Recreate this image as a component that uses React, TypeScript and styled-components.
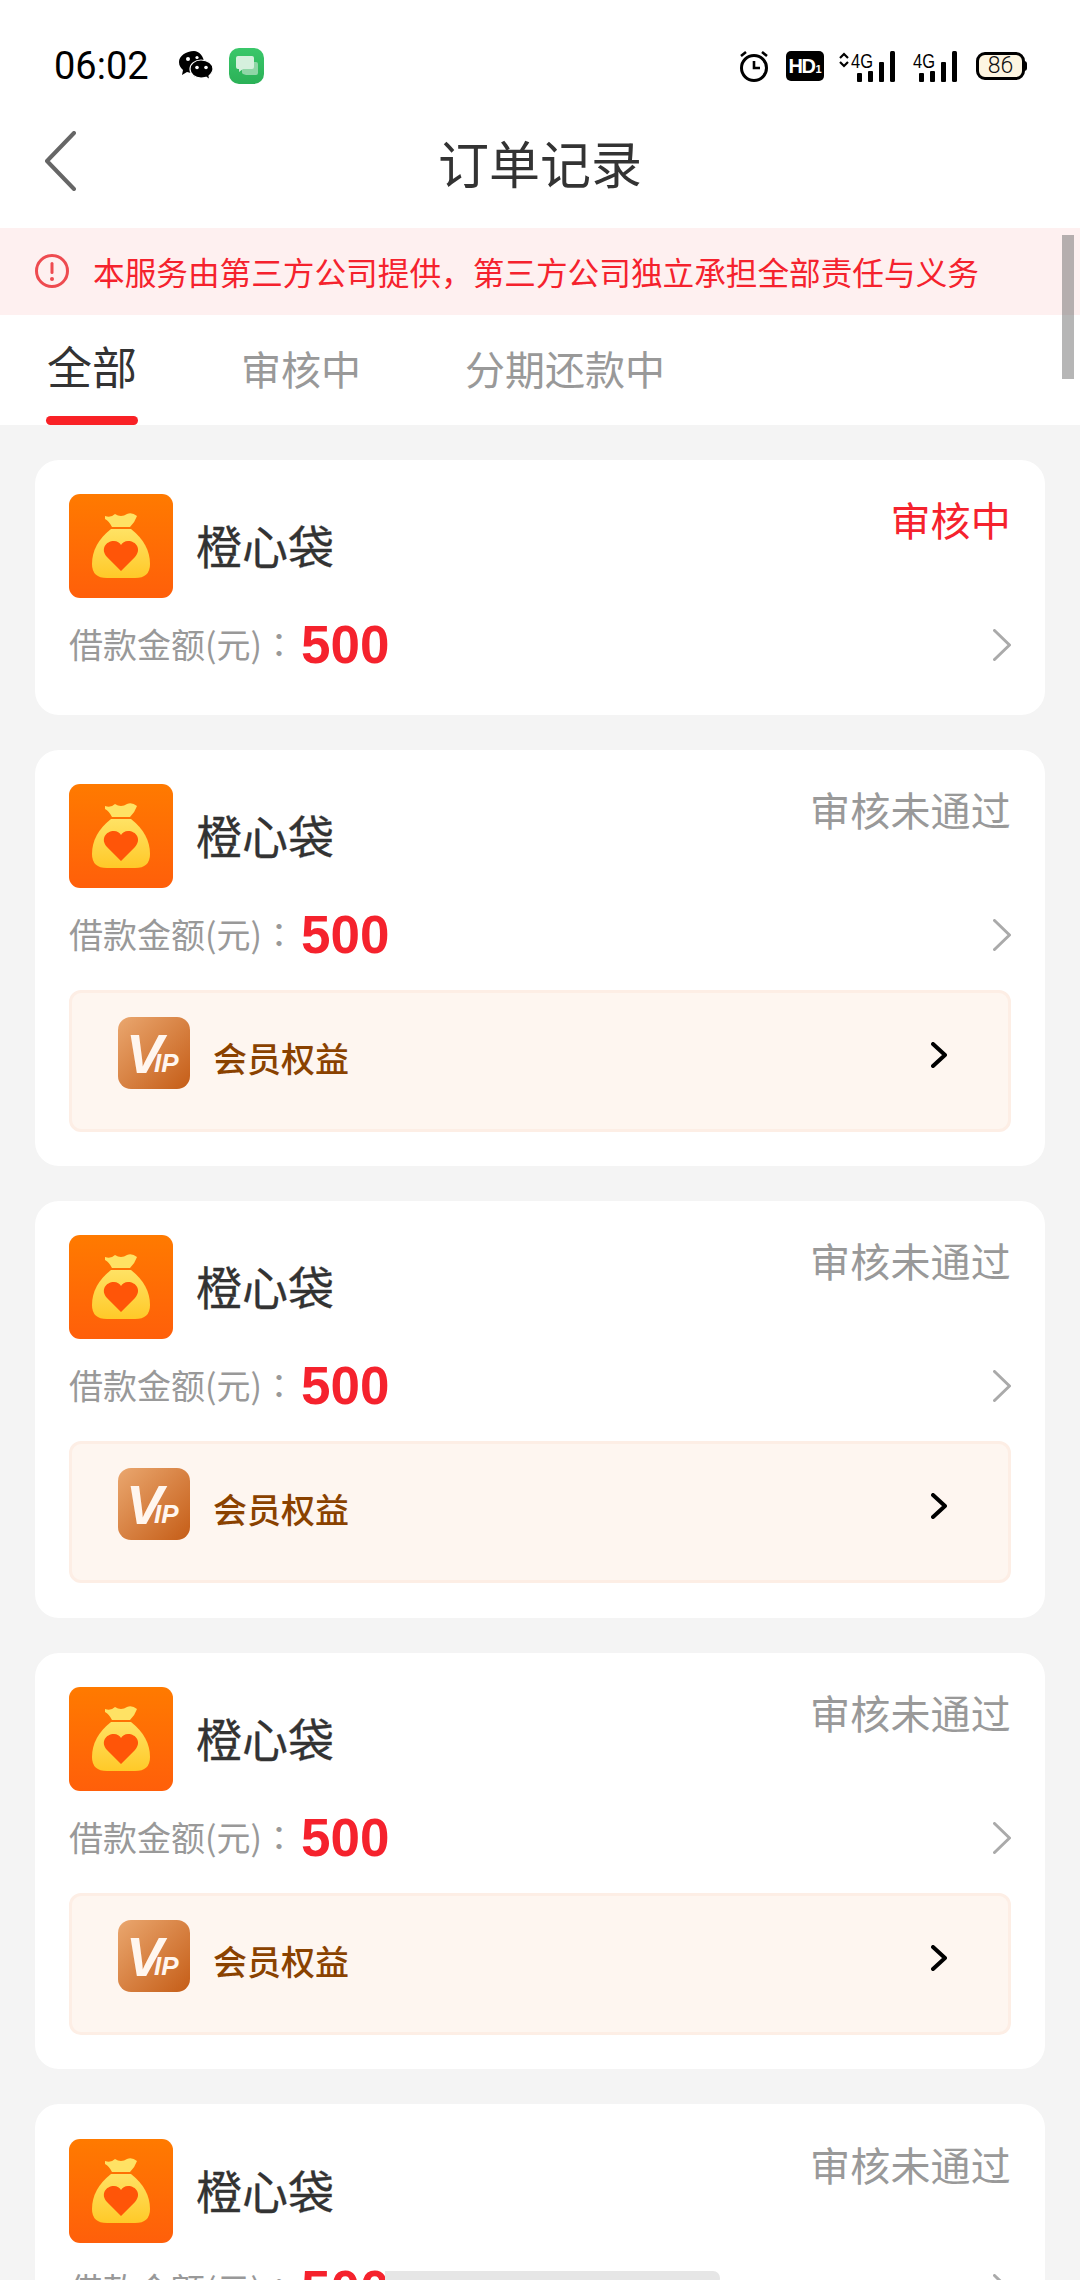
import React from "react";
import styled, { createGlobalStyle } from "styled-components";

const Global = createGlobalStyle`
  html, body { margin: 0; padding: 0; background: #f4f4f4; }
  * { box-sizing: border-box; }
`;

const CJK = `"Noto Sans CJK SC", "Noto Sans", sans-serif`;

const Page = styled.div`
  position: relative;
  width: 1080px;
  height: 2280px;
  overflow: hidden;
  background: #f4f4f4;
  font-family: ${CJK};
`;

const StatusBar = styled.div`
  height: 96px;
  padding: 36px 55px 0 54px;
  background: #fff;
  display: flex;
  align-items: center;
  justify-content: space-between;
  color: #000;
`;
const StatusLeft = styled.div`
  display: flex;
  align-items: center;
`;
const Clock = styled.span`
  font-family: Roboto, sans-serif;
  font-size: 38px;
  line-height: 40px;
  width: 125px;
`;
const StatusRight = styled.div`
  display: flex;
  align-items: center;
`;
const HdBadge = styled.span`
  width: 38px;
  height: 30px;
  margin: 0 15px 0 18px;
  border-radius: 5px;
  background: #000;
  color: #fff;
  font-family: "Liberation Sans", sans-serif;
  font-weight: 700;
  font-size: 20px;
  line-height: 30px;
  text-align: center;
  letter-spacing: -1.500px;
  white-space: nowrap;
  sub {
    font-size: 11px;
    vertical-align: baseline;
    letter-spacing: 0;
    margin-left: 1px;
  }
`;
const Battery = styled.span`
  width: 49px;
  height: 28px;
  margin-left: 19px;
  border: 3px solid #000;
  border-radius: 9px;
  background: #fdf5e1;
  color: #111;
  font-family: Roboto, sans-serif;
  font-weight: 300;
  font-size: 23px;
  line-height: 22px;
  text-align: center;
  position: relative;
  &::after {
    content: "";
    position: absolute;
    right: -5px;
    top: 6px;
    width: 3px;
    height: 10px;
    border-radius: 0 3px 3px 0;
    background: #000;
  }
`;

const NavBar = styled.div`
  position: relative;
  height: 132px;
  background: #fff;
  display: flex;
  align-items: center;
  justify-content: center;
`;
const BackButton = styled.svg`
  position: absolute;
  left: 44px;
  top: 35px;
`;
const Title = styled.h1`
  margin: 0;
  font-size: 51px;
  font-weight: 400;
  color: #333;
  line-height: 70px;
`;

const Banner = styled.div`
  height: 87px;
  padding: 0 0 2px 35px;
  background: #fef0f0;
  display: flex;
  align-items: center;
  gap: 24px;
  color: #f5222d;
  font-size: 31.650px;
  white-space: nowrap;
`;

const Tabs = styled.div`
  height: 110px;
  padding-left: 47px;
  background: #fff;
  display: flex;
  gap: 104px;
`;
const Tab = styled.div<{ $active?: boolean }>`
  position: relative;
  height: 110px;
  line-height: ${(p) => (p.$active ? "102px" : "106px")};
  font-size: ${(p) => (p.$active ? "45px" : "40px")};
  color: ${(p) => (p.$active ? "#333" : "#999")};
  &::after {
    content: "";
    display: ${(p) => (p.$active ? "block" : "none")};
    position: absolute;
    left: -1px;
    right: -1px;
    bottom: 0;
    height: 9px;
    border-radius: 5px;
    background: #f92126;
  }
`;

const List = styled.div`
  padding: 35px 35px 0;
  display: flex;
  flex-direction: column;
  gap: 35px;
`;
const Card = styled.div`
  flex: none;
  padding: 34.200px 34px 34.400px;
  background: #fff;
  border-radius: 24px;
`;
const CardHead = styled.div`
  display: flex;
  align-items: flex-start;
`;
const AppIcon = styled.svg`
  flex: none;
  display: block;
`;
const AppName = styled.div`
  margin-left: 23px;
  height: 104px;
  line-height: 100px;
  font-size: 46px;
  color: #333;
  flex: 1;
  -webkit-text-stroke: 0.300px #333;
`;
const Status = styled.div<{ $pending?: boolean }>`
  margin-top: -5px;
  font-size: 40px;
  line-height: 60px;
  letter-spacing: 0.200px;
  color: ${(p) => (p.$pending ? "#f5222d" : "#999")};
`;
const AmountRow = styled.div`
  margin-top: 12px;
  height: 70px;
  display: flex;
  align-items: center;
`;
const AmountLabel = styled.span`
  font-size: 34px;
  line-height: 68px;
  height: 70px;
  color: #999;
  white-space: nowrap;
  width: 232px;
`;
const LabelColon = styled.span`
  font-family: "Noto Sans CJK TC", sans-serif;
`;
const AmountValue = styled.span`
  flex: 1;
  font-family: "Liberation Sans", Arial, sans-serif;
  font-weight: 700;
  font-size: 53px;
  line-height: 70px;
  color: #f5222d;
`;
const VipPanel = styled.div`
  margin-top: 20px;
  height: 142px;
  padding: 24px 61px 0 46px;
  background: #fef6f0;
  border: 3px solid #fdeee5;
  border-radius: 12px;
  display: flex;
  align-items: flex-start;
`;
const VipName = styled.span`
  margin-left: 23px;
  margin-top: 17px;
  font-size: 34px;
  line-height: 48px;
  color: #8a4200;
  font-weight: 500;
  flex: 1;
`;
const VipArrow = styled.svg`
  margin-top: 25px;
`;

const HomeBar = styled.div`
  position: absolute;
  left: 385px;
  top: 2271px;
  width: 335px;
  height: 14px;
  border-radius: 0 7px 7px 0;
  background: #e6e6e6;
`;
const ScrollThumb = styled.div`
  position: absolute;
  left: 1062px;
  top: 235px;
  width: 12px;
  height: 144px;
  background: rgba(100, 100, 100, 0.47);
`;

const SignalSvg = styled.svg<{ $second?: boolean }>`
  overflow: visible;
  margin-left: ${(p) => (p.$second ? "18px" : "0")};
`;

const Wechat = () => (
  <svg width="34" height="30" viewBox="0 0 34 30">
    <path d="M15 0C7 0 0 5 0 11c0 4 2 6 4 8l-1 5 5-3c2 .6 4 1 6 1 0-5 5-10 11-10C25 5 20 0 15 0z" fill="#000" />
    <path d="M22 9c-6 0-11 4-11 9s5 9 11 9c2 0 3-.2 5-.8l4 2.800-1-4c2-2 4-4 4-7 0-5-5-9-12-9z" fill="#000" stroke="#fff" strokeWidth="1.200" />
    <circle cx="9" cy="8" r="2" fill="#fff" />
    <circle cx="18" cy="6.500" r="1.600" fill="#fff" />
    <circle cx="18" cy="16.500" r="1.800" fill="#fff" />
    <circle cx="27" cy="16.500" r="1.800" fill="#fff" />
  </svg>
);

const MessageApp = () => (
  <svg width="35" height="36" viewBox="0 0 35 36" style={{ marginLeft: 16 }}>
    <defs>
      <linearGradient id="msgBg" x1="0" y1="0" x2="0" y2="1">
        <stop offset="0" stopColor="#3ac76a" />
        <stop offset="1" stopColor="#2bb157" />
      </linearGradient>
    </defs>
    <rect width="35" height="36" rx="10" fill="url(#msgBg)" />
    <path d="M13 14h14a2 2 0 0 1 2 2v9a2 2 0 0 1-2 2h-10l-3-1a2 2 0 0 1-1-2z" fill="#8fd6a6" />
    <path d="M9 8h14a2 2 0 0 1 2 2v9a2 2 0 0 1-2 2H14l-4 3v-3H9a2 2 0 0 1-2-2v-9a2 2 0 0 1 2-2z" fill="#d5f0dd" />
  </svg>
);

const Alarm = () => (
  <svg width="30" height="32" viewBox="0 0 30 32" fill="none" stroke="#000" style={{ marginRight: -1 }}>
    <circle cx="15" cy="18" r="12.500" strokeWidth="3" />
    <path d="M15 11v7h6" strokeWidth="2.600" />
    <path d="M2 6l5-4M28 6l-5-4" strokeWidth="2.600" />
  </svg>
);

const SignalLabel = styled.text`
  font-family: "Liberation Sans", sans-serif;
  font-size: 21px;
  font-weight: 400;
`;

const Signal = ({ arrows }: { arrows?: boolean }) => (
  <SignalSvg $second={!arrows} width={arrows ? 56 : 44} height="31" viewBox={arrows ? "0 0 56 31" : "12 0 44 31"}>
    {arrows && <path d="M1 7l4-4 4 4M1 11l4 4 4-4" fill="none" stroke="#000" strokeWidth="2.200" />}
    <SignalLabel x="12" y="17" fill="#000" textLength="22" lengthAdjust="spacingAndGlyphs">4G</SignalLabel>
    <rect x="18" y="22" width="5" height="9" rx="1" />
    <rect x="29" y="20" width="5" height="11" rx="1" />
    <rect x="40" y="11" width="5" height="20" rx="1" />
    <rect x="51" y="0" width="5" height="31" rx="1.500" />
  </SignalSvg>
);

const BagIcon = ({ id }: { id: number }) => (
  <AppIcon width="104" height="104" viewBox="0 0 104 104">
    <defs>
      <linearGradient id={`bg${id}`} x1="0" y1="0" x2="0" y2="1">
        <stop offset="0" stopColor="#ff7a00" />
        <stop offset="1" stopColor="#ff5f0a" />
      </linearGradient>
      <linearGradient id={`bag${id}`} x1="0" y1="0" x2="0" y2="1">
        <stop offset="0" stopColor="#ffe264" />
        <stop offset="1" stopColor="#ffc928" />
      </linearGradient>
    </defs>
    <rect width="104" height="104" rx="11" fill={`url(#bg${id})`} />
    <path d="M36 22Q42 24 46 20Q52 24 58 20Q63 18 68 22Q66 28 61 33H43Q40 27 36 25Z" fill="#ffe264" />
    <path d="M42 35Q23 50 23 70Q23 84 38 84H66Q81 84 81 70Q81 50 62 35Z" fill={`url(#bag${id})`} />
    <path d="M52 77L38 63C31 55 37 47 45 47C48 47 51 49 52 51C53 49 56 47 59 47C67 47 73 55 66 63Z" fill="#ff5508" />
  </AppIcon>
);

const VipLetter = styled.text<{ $size: number }>`
  font-family: "Liberation Sans", sans-serif;
  font-weight: 700;
  font-style: italic;
  font-size: ${(p) => p.$size}px;
  fill: #fff6ef;
`;

const VipIcon = ({ id }: { id: number }) => (
  <svg width="72" height="72" viewBox="0 0 72 72" style={{ flex: "none" }}>
    <defs>
      <linearGradient id={`vip${id}`} x1="0" y1="0" x2="1" y2="1">
        <stop offset="0" stopColor="#eaa76f" />
        <stop offset="1" stopColor="#c55d17" />
      </linearGradient>
    </defs>
    <rect width="72" height="72" rx="13" fill={`url(#vip${id})`} />
    <VipLetter $size={56} x="8" y="56">V</VipLetter>
    <VipLetter $size={26} x="36" y="55">IP</VipLetter>
  </svg>
);

const Chevron = ({ color, w, h, sw }: { color: string; w: number; h: number; sw: number }) => (
  <svg width={w} height={h} viewBox={`0 0 ${w} ${h}`} fill="none" stroke={color} strokeWidth={sw} strokeLinecap="round" strokeLinejoin="round">
    <path d={`M${sw / 2} ${sw / 2}L${w - sw / 2} ${h / 2}L${sw / 2} ${h - sw / 2}`} />
  </svg>
);

const orders = [
  { status: "审核中", pending: true, vip: false },
  { status: "审核未通过", pending: false, vip: true },
  { status: "审核未通过", pending: false, vip: true },
  { status: "审核未通过", pending: false, vip: true },
  { status: "审核未通过", pending: false, vip: true },
];

export default function App() {
  return (
    <Page>
      <Global />
      <StatusBar>
        <StatusLeft>
          <Clock>06:02</Clock>
          <Wechat />
          <MessageApp />
        </StatusLeft>
        <StatusRight>
          <Alarm />
          <HdBadge>HD<sub>1</sub></HdBadge>
          <Signal arrows />
          <Signal />
          <Battery>86</Battery>
        </StatusRight>
      </StatusBar>
      <NavBar>
        <BackButton width="32" height="60" viewBox="0 0 32 60" fill="none" stroke="#666" strokeWidth="4" strokeLinecap="round" strokeLinejoin="round">
          <path d="M30 2L3 30L30 58" />
        </BackButton>
        <Title>订单记录</Title>
      </NavBar>
      <Banner>
        <svg width="34" height="34" viewBox="0 0 34 34" style={{ flex: "none" }}>
          <circle cx="17" cy="17" r="15.500" fill="none" stroke="#ee4b50" strokeWidth="3" />
          <rect x="15.500" y="8" width="3" height="12" rx="1.500" fill="#ee4b50" />
          <circle cx="17" cy="25" r="2" fill="#ee4b50" />
        </svg>
        本服务由第三方公司提供，第三方公司独立承担全部责任与义务
      </Banner>
      <Tabs>
        <Tab $active>全部</Tab>
        <Tab>审核中</Tab>
        <Tab>分期还款中</Tab>
      </Tabs>
      <List>
        {orders.map((o, i) => (
          <Card key={i}>
            <CardHead>
              <BagIcon id={i} />
              <AppName>橙心袋</AppName>
              <Status $pending={o.pending}>{o.status}</Status>
            </CardHead>
            <AmountRow>
              <AmountLabel>借款金额(元)<LabelColon>：</LabelColon></AmountLabel>
              <AmountValue>500</AmountValue>
              <Chevron color="#aaa" w={18} h={32} sw={3} />
            </AmountRow>
            {o.vip && (
              <VipPanel>
                <VipIcon id={i} />
                <VipName>会员权益</VipName>
                <VipArrow as="svg" width="16" height="26" viewBox="0 0 16 26" fill="none" stroke="#000" strokeWidth="4" strokeLinecap="round" strokeLinejoin="round">
                  <path d="M2 2L14 13L2 24" />
                </VipArrow>
              </VipPanel>
            )}
          </Card>
        ))}
      </List>
      <ScrollThumb />
      <HomeBar />
    </Page>
  );
}
